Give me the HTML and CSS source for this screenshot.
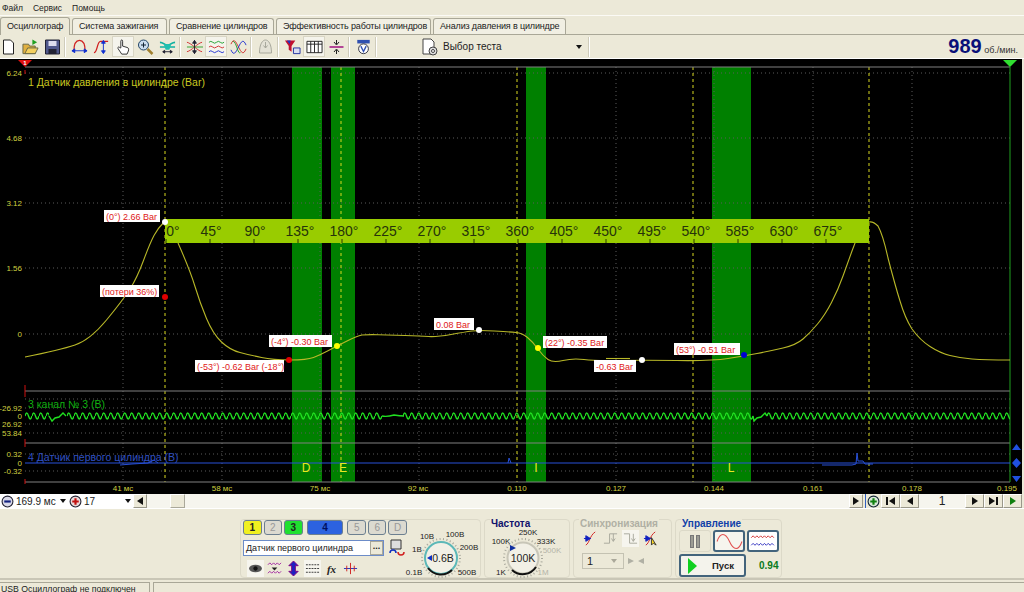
FILE: index.html
```html
<!DOCTYPE html>
<html lang="ru">
<head>
    <meta charset="UTF-8">
    <title>USB Осциллограф</title>
    <link rel="stylesheet" href="styles.css">
</head>
<body>

<div class="menu">
    <span>Файл</span>
    <span>Сервис</span>
    <span>Помощь</span>
</div>

<div class="tabs">
    <div class="tab tab-active">Осциллограф</div>
    <div class="tab">Система зажигания</div>
    <div class="tab">Сравнение цилиндров</div>
    <div class="tab">Эффективность работы цилиндров</div>
    <div class="tab">Анализ давления в цилиндре</div>
</div>

<div class="toolbar">
    <div class="tool"><svg viewBox="0 0 16 16"><path d="M3 1h7l3 3v11H3z" fill="#fff" stroke="#222"/></svg></div>
    <div class="tool"><svg viewBox="0 0 18 16"><path d="M1 5h6l1 2h6v8H1z" fill="#e0b040" stroke="#664"/><path d="M3 15l3-6h11l-3 6z" fill="#f4d060" stroke="#664"/><path d="M11 0l5 3-5 3z" fill="#20a020"/></svg></div>
    <div class="tool"><svg viewBox="0 0 16 16"><path d="M1 1h14v14H1z" fill="#50588c" stroke="#223"/><path d="M4 2h8v5H4z" fill="#dde"/><path d="M4 10h8v5H4z" fill="#223"/></svg></div>
    <div class="sep"></div>
    <div class="tool"><svg viewBox="0 0 18 16"><path d="M3 13C3 4 6 1 9 1s6 3 6 12" fill="none" stroke="#d02020" stroke-width="1.4"/><path d="M1 12h16M1 12l3-2v4zM17 12l-3-2v4z" fill="#1030d0" stroke="#1030d0"/></svg></div>
    <div class="tool"><svg viewBox="0 0 18 16"><path d="M1 14c4 0 3-12 7-12h8" fill="none" stroke="#d02020" stroke-width="1.3"/><path d="M11 2v12M11 1L9 4h4zM11 15l-2-3h4z" fill="#1030d0" stroke="#1030d0"/></svg></div>
    <div class="tool tool-down"><svg viewBox="0 0 16 18"><path d="M5 10V2.500c0-2 2-2 2 0V8l5 1.500c2 .5 2 2 1.500 4L12 17H6L2 11c-1-2 1-3 2-1z" fill="#fff" stroke="#222"/></svg></div>
    <div class="tool"><svg viewBox="0 0 16 16"><circle cx="6" cy="6" r="5" fill="#cde" stroke="#246"/><path d="M6 3.500v5M3.500 6h5" stroke="#123"/><path d="M10 10l5 5" stroke="#a08030" stroke-width="2.500"/></svg></div>
    <div class="tool"><svg viewBox="0 0 18 16"><path d="M1 3c4 0 4 3 8 3s4-3 8-3M1 8h16" fill="none" stroke="#10b0a0" stroke-width="1.800"/><path d="M5 5h8l-2 6H7z" fill="#20c0b0"/><path d="M4 13h10M4 13l2-1.500v3zM14 13l-2-1.500v3z" stroke="#223"/></svg></div>
    <div class="sep"></div>
    <div class="tool"><svg viewBox="0 0 18 16"><path d="M1 3c5 1 11 9 16 10M1 13c5-1 11-9 16-10" fill="none" stroke="#d03030"/><path d="M1 8h17" stroke="#30a030"/><path d="M9 1v14M9 1L7 4h4zM9 15l-2-3h4z" fill="#223" stroke="#223"/></svg></div>
    <div class="tool tool-down"><svg viewBox="0 0 18 16"><g fill="none"><path d="M1 3q2-2 4 0t4 0 4 0 4 0" stroke="#20a030"/><path d="M1 8q2-2 4 0t4 0 4 0 4 0" stroke="#d03030"/><path d="M1 13q2-2 4 0t4 0 4 0 4 0" stroke="#2030d0"/></g></svg></div>
    <div class="tool"><svg viewBox="0 0 18 16"><g fill="none"><path d="M1 5c3-7 5-3 8 3s5 9 8 2" stroke="#d03030"/><path d="M1 11c3 7 5 3 8-3s5-9 8-2" stroke="#2030d0"/><path d="M3 2c4 0 5 14 8 12" stroke="#20a030"/></g></svg></div>
    <div class="sep"></div>
    <div class="tool"><svg viewBox="0 0 16 16"><path d="M2 14C2 5 5 1 8 1s6 4 6 13z" fill="#e4e2d6" stroke="#a8a89c"/><path d="M8 3v6M6 6.500L8 9l2-2.500" fill="none" stroke="#a8a89c"/></svg></div>
    <div class="sep"></div>
    <div class="tool"><svg viewBox="0 0 18 16"><path d="M1 1h11L8 7v6L5 11V7z" fill="#c01030"/><path d="M3 1h4L6 5z" fill="#2030c0"/><path d="M10 9h7v6h-7z" fill="#d8dcf0" stroke="#2030a0"/></svg></div>
    <div class="tool tool-down"><svg viewBox="0 0 18 16"><path d="M1 2h16v12H1z" fill="#fff" stroke="#222"/><path d="M1 5h16M5 2v12M9 2v12M13 2v12" stroke="#222"/></svg></div>
    <div class="tool"><svg viewBox="0 0 16 16"><path d="M1 8h14" stroke="#a01080" stroke-width="1.500"/><path d="M8 1v4M8 15v-4M5.500 3L8 6l2.500-3M5.500 13L8 10l2.500 3" fill="none" stroke="#222"/></svg></div>
    <div class="sep"></div>
    <div class="tool"><svg viewBox="0 0 16 18"><path d="M1 1h14v4H1z" fill="#3050b0"/><circle cx="8" cy="11" r="5.500" fill="#fff" stroke="#223"/><path d="M5 8l3 6 3-6" fill="none" stroke="#3050b0" stroke-width="1.500"/></svg></div>
    <div class="sep"></div>
    <div class="test-select">
        <svg class="test-icon" viewBox="0 0 16 18"><path d="M1 1h8l3 3v12H1z" fill="#fff" stroke="#444"/><circle cx="11" cy="13" r="4" fill="#ddd" stroke="#444"/><circle cx="11" cy="13" r="1.500" fill="#fff" stroke="#444"/></svg>
        <span>Выбор теста</span>
        <i class="drop"></i>
    </div>
    <div class="sep"></div>
    <div class="rpm"><b>989</b> об./мин.</div>
</div>

<div class="scope">
    <svg class="plot" viewBox="0 59 1024 435" width="1024" height="435">
        <defs>
            <pattern id="wave" patternUnits="userSpaceOnUse" x="25" y="409" width="7" height="14">
                <path d="M0 7Q1.750 1 3.500 7T7 7" fill="none" stroke="#20e020" stroke-width="1.400"/>
            </pattern>
        </defs>

        <!-- marked sectors -->
        <rect class="band" x="292" y="67" width="30" height="415"/>
        <rect class="band" x="331" y="67" width="24" height="415"/>
        <rect class="band" x="526" y="67" width="20" height="415"/>
        <rect class="band" x="712" y="67" width="39" height="415"/>

        <!-- grid -->
        <path class="grid" d="M25 73H1010M25 138H1010M25 203H1010M25 268H1010M25 334H1010M25 399H1010M25 408H1010M25 424H1010M25 433H1010M25 454H1010M25 471H1010"/>
        <path class="grid" d="M123 67V482M222 67V482M320 67V482M419 67V482M616 67V482M714 67V482M813 67V482M912 67V482"/>
        <path class="marks" d="M165 67V482M341 67V482M517 67V482M693 67V482M869 67V482"/>
        <path class="rule" d="M25 67H1010M25 391H1010M25 443H1010M25 482H1010"/>
        <path class="rule-red" d="M25 70V74M25 385V397M25 439V447M25 479V484"/>
        <path class="rule-green" d="M1010 67V482"/>

        <!-- y scale -->
        <g class="scale">
            <text x="22" y="76">6.24</text>
            <text x="22" y="141">4.68</text>
            <text x="22" y="206">3.12</text>
            <text x="22" y="271">1.56</text>
            <text x="22" y="337">0</text>
            <text x="22" y="411">-26.92</text>
            <text x="22" y="419">0</text>
            <text x="22" y="427">26.92</text>
            <text x="22" y="436">53.84</text>
            <text x="22" y="457">0.32</text>
            <text x="22" y="466">0</text>
            <text x="22" y="474">-0.32</text>
        </g>

        <!-- x scale -->
        <g class="time">
            <text x="123" y="491">41 мс</text>
            <text x="222" y="491">58 мс</text>
            <text x="320" y="491">75 мс</text>
            <text x="418" y="491">92 мс</text>
            <text x="517" y="491">0.110</text>
            <text x="616" y="491">0.127</text>
            <text x="714" y="491">0.144</text>
            <text x="813" y="491">0.161</text>
            <text x="912" y="491">0.178</text>
            <text x="1007" y="491">0.195</text>
        </g>

        <!-- channels -->
        <text class="title-yellow" x="28" y="86">1 Датчик давления в цилиндре (Bar)</text>
        <text class="title-green" x="28" y="408">3 канал № 3 (В)</text>
        <text class="title-blue" x="28" y="461">4 Датчик первого цилиндра (В)</text>

        <path class="trace" d="M25 357Q60 350 75 345Q90 340 106.500 320Q123 300 130 289Q137 278 143.500 260.500Q150 243 154 235.500Q158 228 165 221"/>
        <path class="trace" d="M178 243Q190 270 195 286.500Q200 303 206.500 318.500Q213 334 221.500 342Q230 350 240 352.500Q250 355 261.500 357.500Q273 360 290 360Q307 360 313.500 357.500Q320 355 328.500 350.500Q337 346 347 341Q357 336 362 335Q367 334.500 378 334.700Q390 335 405 335.500Q420 336 428.500 336.500Q437 337 451 334.500Q465 332 472 331Q479 330 494.500 331Q510 332 516 332.500Q522 333 527.500 337.500Q533 342 538 349Q543 356 548 359.500Q553 363 563 360.500Q573 358 584 359.500Q595 361 618 360.500Q642 360 677 360.500Q712 361 728 358.500Q744 356 757 353.500Q770 351 783 348Q796 345 803 339Q810 333 817.500 324Q825 315 831.500 302.500Q838 290 843 276Q848 262 852 251Q856 240 860 231Q864 222 869 222Q873 221 878 226Q883 235 888 258Q895 285 900 301Q905 318 912 329Q920 340 930 346.500Q940 353 950 355.500Q960 358 972 359Q985 360 1010 360"/>
        <path class="trace" d="M606 358.500h24"/>

        <rect x="25" y="409" width="24" height="14" fill="url(#wave)"/>
        <path class="trace-green" d="M49 416l3 5 3-3 4-1 4-4 3 3"/>
        <rect x="67" y="409" width="315" height="14" fill="url(#wave)"/>
        <path class="trace-green" d="M382 416q5 1 12-1 6 1 10 1"/>
        <rect x="403" y="409" width="350" height="14" fill="url(#wave)"/>
        <path class="trace-green" d="M753 416l1 5 3-3 4-1 4-4 2 3"/>
        <rect x="767" y="409" width="243" height="14" fill="url(#wave)"/>

        <path class="trace-blue" d="M25 463H1010"/>
        <path class="trace-blue" d="M120 465l12-1 16-1 6-3 4 3M508 463l1-5 2 5M822 465h30l4-1 1-11 1 8h5l2 3h8"/>

        <!-- degree ruler -->
        <rect class="ruler" x="165" y="219" width="704" height="24"/>
        <path class="ruler-ticks" d="M166 239v4M210 239v4M254 239v4M298 239v4M342 239v4M386 239v4M430 239v4M474 239v4M518 239v4M562 239v4M606 239v4M650 239v4M694 239v4M738 239v4M782 239v4M826 239v4"/>
        <g class="degrees">
            <text x="173" y="236">0°</text>
            <text x="211" y="236">45°</text>
            <text x="255" y="236">90°</text>
            <text x="300" y="236">135°</text>
            <text x="344" y="236">180°</text>
            <text x="388" y="236">225°</text>
            <text x="432" y="236">270°</text>
            <text x="476" y="236">315°</text>
            <text x="520" y="236">360°</text>
            <text x="564" y="236">405°</text>
            <text x="608" y="236">450°</text>
            <text x="652" y="236">495°</text>
            <text x="696" y="236">540°</text>
            <text x="740" y="236">585°</text>
            <text x="784" y="236">630°</text>
            <text x="828" y="236">675°</text>
        </g>

        <!-- sector letters -->
        <g class="letters">
            <text x="306" y="472">D</text>
            <text x="343" y="472">E</text>
            <text x="536" y="472">I</text>
            <text x="731" y="472">L</text>
        </g>

        <!-- points -->
        <circle cx="165" cy="222" r="3" fill="#fff"/>
        <circle cx="165" cy="297" r="3" fill="#e00000"/>
        <circle cx="289" cy="360" r="3" fill="#e00000"/>
        <circle cx="337" cy="346" r="3" fill="#ffff00"/>
        <circle cx="479" cy="330" r="3" fill="#fff"/>
        <circle cx="538" cy="348" r="3" fill="#ffff00"/>
        <circle cx="642" cy="360" r="3" fill="#fff"/>
        <circle cx="744" cy="355" r="3" fill="#0000d0"/>

        <!-- labels -->
        <g class="note">
            <rect x="104" y="210" width="56" height="12"/><text x="106" y="219.500">(0°) 2.66 Bar</text>
            <rect x="100" y="285" width="59" height="12"/><text x="102" y="294.500">(потери 36%)</text>
            <rect x="269" y="335" width="63" height="12"/><text x="271" y="344.500">(-4°) -0.30 Bar</text>
            <rect x="195" y="360" width="89" height="12"/><text x="197" y="369.500">(-53°) -0.62 Bar (-18°)</text>
            <rect x="434" y="318" width="40" height="12"/><text x="436" y="327.500">0.08 Bar</text>
            <rect x="543" y="336" width="64" height="12"/><text x="545" y="345.500">(22°) -0.35 Bar</text>
            <rect x="594" y="360" width="42" height="12"/><text x="596" y="369.500">-0.63 Bar</text>
            <rect x="674" y="343" width="66" height="12"/><text x="676" y="352.500">(53°) -0.51 Bar</text>
        </g>

        <!-- cursors -->
        <path d="M18 60h14l-7 7z" fill="#e01010"/>
        <text class="cursor-num" x="25" y="65">1</text>
        <path d="M1003 60h14l-7 7z" fill="#30e030"/>
        <path d="M1012 450h9l-4.500-6zM1016.500 458l4.500 5-4.500 5-4.500-5zM1012 476h9l-4.500 6z" fill="#2050e0"/>
    </svg>
</div>

<div class="scroll-row">
    <div class="combo combo-time">
        <svg class="round" viewBox="0 0 12 12"><circle cx="6" cy="6" r="5" fill="#d8d8e8" stroke="#223"/><path d="M3 6h6" stroke="#102080" stroke-width="2"/></svg>
        <span>169.9 мс</span>
        <i class="drop"></i>
    </div>
    <div class="combo combo-count">
        <svg class="round" viewBox="0 0 12 12"><circle cx="6" cy="6" r="5" fill="#e8d8d8" stroke="#223"/><path d="M3 6h6M6 3v6" stroke="#c01010" stroke-width="2"/></svg>
        <span>17</span>
        <i class="drop"></i>
    </div>
    <div class="btn btn-small"><i class="tri-left"></i></div>
    <div class="track"><div class="thumb"></div></div>
    <div class="btn btn-small"><i class="tri-right"></i></div>
    <div class="plus-wrap">
        <svg class="round" viewBox="0 0 12 12"><circle cx="6" cy="6" r="5" fill="#d8e8d8" stroke="#123"/><path d="M3 6h6M6 3v6" stroke="#108010" stroke-width="2"/></svg>
    </div>
    <div class="btn btn-nav"><i class="bar"></i><i class="tri-left"></i></div>
    <div class="btn btn-nav"><i class="tri-left"></i></div>
    <div class="page-num">1</div>
    <div class="btn btn-nav"><i class="tri-right"></i></div>
    <div class="btn btn-nav"><i class="tri-right"></i><i class="bar"></i></div>
    <div class="btn btn-nav"><i class="tri-right tri-green"></i></div>
</div>

<div class="panels">
    <div class="panel panel-channel">
        <div class="panel-left">
            <div class="channels">
                <div class="ch ch-yellow">1</div>
                <div class="ch ch-off">2</div>
                <div class="ch ch-green">3</div>
                <div class="ch ch-blue">4</div>
                <div class="ch ch-off">5</div>
                <div class="ch ch-off">6</div>
                <div class="ch ch-off">D</div>
            </div>
            <div class="sensor-row">
                <div class="sensor"><span>Датчик первого цилиндра</span><em>...</em></div>
                <svg class="sensor-icon" viewBox="0 0 16 17"><path d="M2 1h10v9H2z" fill="#ddd" stroke="#333"/><path d="M1 14a3 3 0 0 1 6 0" fill="none" stroke="#1030c0" stroke-width="1.500"/><path d="M9 13a3 3 0 0 0 6 0" fill="none" stroke="#d02020" stroke-width="1.500"/></svg>
            </div>
            <div class="ch-tools">
                <div class="mini mini-down"><svg viewBox="0 0 14 14"><ellipse cx="7" cy="7" rx="6" ry="3.500" fill="#555"/><circle cx="7" cy="7" r="2" fill="#111"/></svg></div>
                <div class="mini"><svg viewBox="0 0 16 14"><g fill="none" stroke="#a020a0"><path d="M1 3l2-2 2 2 2-2 2 2 2-2 2 2 2-2"/><path d="M1 12l2-2 2 2 2-2 2 2 2-2 2 2 2-2"/></g><path d="M5 6h6l-3 3z" fill="#222"/></svg></div>
                <div class="mini"><svg viewBox="0 0 14 16"><path d="M7 0l5 5H9v6h3l-5 5-5-5h3V5H2z" fill="#2020c0" stroke="#800080"/></svg></div>
                <div class="mini mini-down"><svg viewBox="0 0 16 14"><path d="M1 3h14M1 7h14M1 11h14" stroke="#333" stroke-dasharray="2 1"/></svg></div>
                <div class="mini mini-fx"><b>fx</b></div>
                <div class="mini"><svg viewBox="0 0 16 14"><path d="M1 7h14" stroke="#2030c0"/><path d="M8 1v12M4 4v6M12 4v6" stroke="#d02020"/></svg></div>
            </div>
        </div>
        <svg class="dial dial-volt" viewBox="0 0 72 58">
            <g class="dial-label">
                <text x="20" y="19">10В</text>
                <text x="48" y="17">100В</text>
                <text x="10" y="32">1В</text>
                <text x="62" y="30">200В</text>
                <text x="7" y="55">0.1В</text>
                <text x="60" y="55">500В</text>
            </g>
            <circle cx="34" cy="38" r="19" class="dial-ticks"/>
            <circle cx="34" cy="38" r="16" class="dial-ring"/>
            <path d="M45 50A16 16 0 0 1 21 48" class="dial-arc"/>
            <path d="M20 38l5-3v6z" fill="#1030c0"/>
            <text class="dial-value" x="36" y="42">0.6В</text>
        </svg>
    </div>

    <div class="panel panel-freq">
        <div class="panel-title">Частота</div>
        <svg class="dial dial-freq" viewBox="0 0 84 49">
            <g class="dial-label">
                <text x="43" y="6">250K</text>
                <text x="16" y="15">100K</text>
                <text x="61" y="15">333K</text>
                <text class="dial-off" x="67" y="24">500K</text>
                <text x="16" y="46">1K</text>
                <text class="dial-off" x="58" y="46">1M</text>
            </g>
            <circle cx="38" cy="29" r="19" class="dial-ticks"/>
            <circle cx="38" cy="29" r="15.500" class="dial-ring dial-ring-plain"/>
            <path d="M51 38A15.800 15.800 0 0 1 27 41" class="dial-arc"/>
            <path d="M25 16l6 3-6 3z" fill="#1030a0"/>
            <text class="dial-value" x="38" y="33">100K</text>
        </svg>
    </div>

    <div class="panel panel-sync">
        <div class="panel-title panel-title-off">Синхронизация</div>
        <div class="sync-tools">
            <div class="mini"><svg viewBox="0 0 16 16"><path d="M3 15c4-2 4-10 10-14" fill="none" stroke="#d02020"/><path d="M1 8h7M8 8L3 5v6z" fill="#1020c0" stroke="#1020c0"/></svg></div>
            <div class="mini"><svg viewBox="0 0 16 16"><path d="M1 13h6V3h8M11 3v8M9 8l2 3 2-3" fill="none" stroke="#a8a89c"/></svg></div>
            <div class="mini mini-down"><svg viewBox="0 0 16 16"><path d="M1 3h6v10h8M11 3v8M9 8l2 3 2-3" fill="none" stroke="#a8a89c"/></svg></div>
            <div class="mini"><svg viewBox="0 0 16 16"><path d="M3 15c4-2 4-10 10-14" fill="none" stroke="#d02020"/><path d="M1 8h7M8 8L3 5v6z" fill="#1020c0" stroke="#1020c0"/><path d="M9 7v8l2-2 3 2z" fill="#ffd820" stroke="#333"/></svg></div>
        </div>
        <div class="sync-row">
            <div class="sync-combo"><span>1</span><i class="drop drop-off"></i></div>
            <svg class="sync-arrows" viewBox="0 0 16 8"><path d="M0 1l6 3-6 3zM16 1l-6 3 6 3z" fill="#b0b0a4"/></svg>
        </div>
    </div>

    <div class="panel panel-control">
        <div class="panel-title panel-title-blue">Управление</div>
        <div class="control-row">
            <div class="ctrl ctrl-pause"><i></i><i></i></div>
            <div class="ctrl ctrl-on"><svg viewBox="0 0 26 16"><path d="M1 8c3-9 8-9 12 0s9 9 12 0" fill="none" stroke="#e05050"/></svg></div>
            <div class="ctrl ctrl-on ctrl-wave"><svg viewBox="0 0 28 18"><path d="M1 5l2-2 2 2 2-2 2 2 2-2 2 2 2-2 2 2 2-2 2 2 2-2 2 2" fill="none" stroke="#d03030"/><path d="M1 13l2-2 2 2 2-2 2 2 2-2 2 2 2-2 2 2 2-2 2 2 2-2 2 2" fill="none" stroke="#3030c0"/></svg></div>
        </div>
        <div class="control-row">
            <div class="start"><i class="start-tri"></i><span>Пуск</span></div>
            <div class="ratio">0.94</div>
        </div>
    </div>
</div>

<div class="status">
    <div class="status-main">USB Осциллограф не подключен</div>
    <div class="status-rest"></div>
</div>

</body>
</html>
```

FILE: styles.css
```css
* {
    box-sizing: border-box;
}

body {
    margin: 0;
    width: 1024px;
    height: 592px;
    overflow: hidden;
    background-color: #ece9d8;
    font-family: "Liberation Sans", Arial, sans-serif;
    font-size: 11px;
    color: #222;
    display: flex;
    flex-direction: column;
}

body > div {
    flex-shrink: 0;
}

/* menu and tabs */

.menu {
    height: 16px;
    display: flex;
    gap: 10px;
    padding-left: 2px;
    align-items: center;
    font-size: 8.500px;
    border-bottom: 1px solid #fbfaf5;
}

.tabs {
    height: 19px;
    display: flex;
    align-items: flex-end;
    gap: 2px;
    border-bottom: 1px solid #a9a797;
}

.tab {
    height: 16px;
    padding: 0 6px;
    line-height: 15px;
    font-size: 9px;
    letter-spacing: -0.15px;
    background-color: #f1efe3;
    border: 1px solid #a9a797;
    border-bottom: none;
    border-radius: 3px 3px 0 0;
    white-space: nowrap;
}

.tab-active {
    height: 18px;
    line-height: 17px;
    background-color: #ece9d8;
    margin-bottom: -1px;
}

.tab:nth-child(1) { width: 70px; }
.tab:nth-child(2) { width: 95px; }
.tab:nth-child(3) { width: 105px; }
.tab:nth-child(4) { width: 155px; }
.tab:nth-child(5) { width: 133px; }

/* toolbar */

.toolbar {
    height: 23px;
    display: flex;
    align-items: center;
    margin-left: -3px;
}

.tool {
    width: 22px;
    height: 21px;
    display: flex;
    align-items: center;
    justify-content: center;
}

.tool svg {
    width: 17px;
    height: 16px;
}

.tool-down {
    background-color: #f5f4ec;
    border: 1px solid #d8d5c4;
}

.sep {
    width: 2px;
    height: 20px;
    margin: 0 2px 0 1px;
    background-color: #cfccbb;
    border-right: 1px solid #fff;
}

.test-select {
    width: 165px;
    margin-left: 43px;
    display: flex;
    align-items: center;
    gap: 5px;
    font-size: 10px;
}

.test-icon {
    width: 16px;
    height: 18px;
}

.test-select .drop {
    margin-left: auto;
    margin-right: 5px;
}

.drop {
    width: 0;
    height: 0;
    border-left: 3.500px solid transparent;
    border-right: 3.500px solid transparent;
    border-top: 4px solid #111;
}

.rpm {
    margin-left: auto;
    margin-right: 6px;
    font-size: 9px;
    color: #333;
}

.rpm b {
    font-size: 20px;
    color: #0a1078;
}

/* scope */

.scope {
    height: 436px;
    border-top: 1px solid #fff;
    overflow: hidden;
}

.plot {
    display: block;
    background: linear-gradient(to right, #000 1022px, #ece9d8 1022px);
}

.band { fill: #008000; }
.grid { fill: none; stroke: #5a5a5a; stroke-dasharray: 1 3; }
.marks { fill: none; stroke: #d8d820; stroke-dasharray: 3 3; }
.rule { fill: none; stroke: #808080; }
.rule-red { fill: none; stroke: #d01010; }
.rule-green { fill: none; stroke: #20a020; }

.scale text {
    font-size: 8px;
    text-anchor: end;
    fill: #d0d040;
}

.time text {
    font-size: 8px;
    text-anchor: middle;
    fill: #d0d040;
}

.title-yellow, .title-green, .title-blue {
    font-size: 10.500px;
}

.title-yellow { fill: #c8c820; }
.title-green { fill: #10b010; }
.title-blue { fill: #3050c0; }

.trace { fill: none; stroke: #b8b828; stroke-width: 1.100; }
.trace-green { fill: none; stroke: #20e020; stroke-width: 1.400; }
.trace-blue { fill: none; stroke: #2850d8; }

.ruler { fill: #99cc00; }
.ruler-ticks { fill: none; stroke: #2c3a00; }

.degrees text {
    font-size: 14px;
    text-anchor: middle;
    fill: #26340a;
}

.letters text {
    font-size: 12px;
    text-anchor: middle;
    fill: #e8e820;
}

.note rect { fill: #fff; }

.note text {
    font-size: 9px;
    fill: #e01818;
}

.cursor-num {
    font-size: 6px;
    font-weight: bold;
    text-anchor: middle;
    fill: #fff;
}

/* scroll row under the scope */

.scroll-row {
    height: 15px;
    display: flex;
    align-items: stretch;
    border-bottom: 1px solid #fff;
    padding-right: 2px;
}

.combo {
    background-color: #fff;
    display: flex;
    align-items: center;
    gap: 2px;
    padding-left: 1px;
    font-size: 10px;
    white-space: nowrap;
}

.combo .drop {
    margin-left: auto;
    margin-right: 2px;
}

.combo-time { width: 68px; }
.combo-count { width: 65px; }

.round {
    width: 13px;
    height: 13px;
    flex-shrink: 0;
}

.btn {
    display: flex;
    align-items: center;
    justify-content: center;
    gap: 1px;
    background-color: #ece9d8;
    border: 1px solid;
    border-color: #fff #9a988a #9a988a #fff;
}

.btn-small { width: 14px; }

.btn-nav { width: 19px; }

.track {
    flex: 1;
    background-color: #f6f5ee;
    padding-left: 23px;
}

.thumb {
    width: 15px;
    height: 100%;
    background-color: #ece9d8;
    border: 1px solid;
    border-color: #fff #aaa89a #aaa89a #fff;
}

.plus-wrap {
    width: 16px;
    display: flex;
    align-items: center;
    justify-content: center;
    border-left: 1px solid #3060c0;
    margin-left: 2px;
}

.page-num {
    width: 46px;
    text-align: center;
    font-size: 12px;
    line-height: 15px;
    background-color: #f6f5ee;
}

.tri-left, .tri-right {
    width: 0;
    height: 0;
    border-top: 4px solid transparent;
    border-bottom: 4px solid transparent;
}

.tri-left { border-right: 6px solid #111; }
.tri-right { border-left: 6px solid #111; }
.tri-green { border-left-color: #108010; }

.bar {
    width: 2px;
    height: 8px;
    background-color: #111;
}

/* bottom panels */

.panels {
    height: 71px;
    display: flex;
    gap: 3px;
    padding: 10px 0 0 240px;
    border-bottom: 2px solid #c9c6b6;
}

.panel {
    height: 59px;
    border: 1px solid #dcd9c8;
    border-radius: 4px;
    position: relative;
}

.panel-channel {
    width: 241px;
    display: flex;
    padding: 0 0 0 2px;
}

.panel-left {
    width: 164px;
    flex-shrink: 0;
    display: flex;
    flex-direction: column;
}

.channels {
    display: flex;
    gap: 2px;
}

.ch {
    width: 19px;
    height: 15px;
    font-size: 10px;
    font-weight: bold;
    line-height: 13px;
    text-align: center;
    border: 1px solid #6c7f90;
    border-radius: 3px;
}

.ch-yellow { background-color: #f0f020; }
.ch-green { background-color: #20e030; }
.ch-off { background-color: #dcdad0; color: #999; font-weight: normal; }

.ch-blue {
    width: 38px;
    background-color: #2c62e0;
    color: #001060;
    margin: 0 2px;
}

.sensor-row {
    display: flex;
    align-items: center;
    gap: 5px;
    margin-top: 4px;
}

.sensor {
    width: 141px;
    height: 16px;
    background-color: #fff;
    border: 1px solid #6c8cc8;
    display: flex;
    align-items: center;
    padding-left: 2px;
    font-size: 9px;
}

.sensor em {
    margin-left: auto;
    width: 13px;
    height: 14px;
    background-color: #ece9d8;
    border: 1px solid #aaa89a;
    font-style: normal;
    font-weight: bold;
    text-align: center;
    line-height: 9px;
    font-size: 9px;
}

.sensor-icon {
    width: 16px;
    height: 17px;
}

.ch-tools {
    display: flex;
    margin-top: 4px;
    padding-left: 4px;
    gap: 2px;
}

.mini {
    width: 17px;
    height: 17px;
    display: flex;
    align-items: center;
    justify-content: center;
}

.mini svg {
    width: 15px;
    height: 15px;
}

.mini-down { background-color: #f6f5ee; }

.mini-fx {
    font-family: "Liberation Serif", serif;
    font-style: italic;
    font-size: 11px;
}

.dial {
    flex-shrink: 0;
    display: block;
    overflow: visible;
}

.dial-volt {
    width: 72px;
    height: 58px;
}

.dial-label text {
    font-size: 8px;
    text-anchor: middle;
    fill: #222;
}

.dial-label .dial-off { fill: #b4b4a8; }

.dial-ticks {
    fill: none;
    stroke: #a8a89c;
    stroke-width: 2;
    stroke-dasharray: 1 2.500;
}

.dial-ring {
    fill: #f2f0e6;
    stroke: #5cb8b8;
    stroke-width: 2;
}

.dial-ring-plain { stroke: #c8c6b8; }

.dial-arc {
    fill: none;
    stroke: #111;
    stroke-width: 2;
}

.dial-value {
    font-size: 10.500px;
    text-anchor: middle;
    fill: #222;
}

.panel-title {
    position: absolute;
    top: -2px;
    left: 5px;
    background-color: #ece9d8;
    padding: 0 1px;
    font-size: 10px;
    font-weight: bold;
    line-height: 11px;
    color: #10106c;
}

.panel-title-off { color: #b0b0a4; }
.panel-title-blue { color: #1040a8; }

.panel-freq {
    width: 86px;
    padding-top: 9px;
}

.dial-freq {
    width: 84px;
    height: 49px;
}

.panel-sync {
    width: 99px;
    padding: 10px 0 0 8px;
}

.sync-tools {
    display: flex;
    gap: 3px;
}

.sync-row {
    display: flex;
    align-items: center;
    gap: 4px;
    margin-top: 6px;
}

.sync-combo {
    width: 42px;
    height: 16px;
    border: 1px solid #c4c2b2;
    display: flex;
    align-items: center;
    padding: 0 6px 0 4px;
    font-size: 11px;
}

.sync-combo .drop {
    margin-left: auto;
}

.drop-off {
    border-top-color: #aaa89a;
}

.sync-arrows {
    width: 16px;
    height: 8px;
}

.panel-control {
    width: 107px;
    padding: 10px 0 0 3px;
    display: flex;
    flex-direction: column;
    gap: 2px;
}

.control-row {
    display: flex;
    align-items: center;
    gap: 2px;
}

.ctrl {
    width: 32px;
    height: 22px;
    display: flex;
    align-items: center;
    justify-content: center;
    gap: 2px;
    border: 1px solid #dcd9c8;
    border-radius: 3px;
}

.ctrl svg {
    width: 27px;
    height: 17px;
}

.ctrl-pause i {
    width: 4px;
    height: 13px;
    background-color: #9c9c94;
    border: 1px solid #777;
}

.ctrl-on {
    background-color: #f6f5ee;
    border: 2px solid #43647c;
}

.ctrl-wave {
    background-color: #fff;
}

.start {
    width: 67px;
    height: 23px;
    display: flex;
    align-items: center;
    background-color: #f4f3ec;
    border: 2px solid #43647c;
    border-radius: 3px;
    padding-left: 7px;
    font-weight: bold;
    font-size: 9.500px;
}

.start-tri {
    width: 0;
    height: 0;
    border-top: 8px solid transparent;
    border-bottom: 8px solid transparent;
    border-left: 9px solid #10d020;
}

.start span {
    margin-left: 15px;
}

.ratio {
    margin-left: 11px;
    font-weight: bold;
    font-size: 10px;
    color: #0a7a20;
}

/* status bar */

.status {
    flex: 1;
    display: flex;
    gap: 3px;
    padding-top: 2px;
    font-size: 8.700px;
    line-height: 13px;
    white-space: nowrap;
}

.status-main {
    width: 150px;
    height: 20px;
    padding-left: 1px;
    border-top: 1px solid #a9a797;
    border-right: 1px solid #a9a797;
}

.status-rest {
    flex: 1;
    border-top: 1px solid #a9a797;
    border-left: 1px solid #a9a797;
}
```
